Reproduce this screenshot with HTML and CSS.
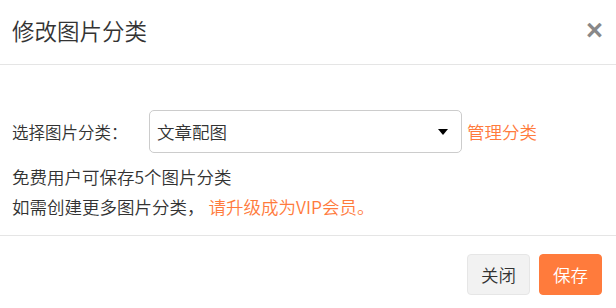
FILE: index.html
```html
<!DOCTYPE html>
<html lang="zh-CN">
<head>
<meta charset="utf-8">
<title>修改图片分类</title>
<link rel="stylesheet" href="styles.css">
</head>
<body>
<div class="modal">
  <div class="modal-header">
    <h4 class="modal-title">修改图片分类</h4>
    <button class="close" type="button">×</button>
  </div>
  <div class="modal-body">
    <div class="form-row">
      <label class="label">选择图片分类：</label>
      <div class="select">
        <span class="select-value">文章配图</span>
        <span class="caret"></span>
      </div>
      <a class="link" href="#">管理分类</a>
    </div>
    <p class="tip">免费用户可保存5个图片分类</p>
    <p class="tip">如需创建更多图片分类，<a class="link upgrade" href="#">请升级成为VIP会员。</a></p>
  </div>
  <div class="modal-footer">
    <button class="btn btn-default" type="button">关闭</button>
    <button class="btn btn-primary" type="button">保存</button>
  </div>
</div>
</body>
</html>
```

FILE: styles.css
```css
* { box-sizing: border-box; }
html, body {
  margin: 0;
  padding: 0;
  background: #fff;
}
body {
  font-family: "Microsoft YaHei", "Noto Sans CJK SC", "Liberation Sans", sans-serif;
  font-weight: 350;
  color: #333;
  width: 616px;
  height: 308px;
  overflow: hidden;
}
.modal {
  display: flex;
  flex-direction: column;
  width: 616px;
}
.modal-header {
  height: 65px;
  border-bottom: 1px solid #e5e5e5;
  display: flex;
  align-items: center;
  justify-content: space-between;
  padding: 0 13px 4px 12px;
}
.modal-title {
  margin: 0;
  font-size: 22.5px;
  font-weight: 350;
  line-height: 30px;
  color: #333;
}
.close {
  border: 0;
  background: none;
  padding: 0;
  font-family: "Liberation Sans", sans-serif;
  font-size: 29px;
  font-weight: bold;
  color: #888;
  line-height: 1;
  cursor: pointer;
}
.modal-body {
  height: 171px;
  padding: 45px 12px 0 12px;
  border-bottom: 1px solid #e5e5e5;
}
.form-row {
  display: flex;
  align-items: center;
  height: 43px;
  margin-bottom: 9px;
}
.label {
  font-size: 16.5px;
  width: 137px;
  flex: none;
}
.select {
  width: 313px;
  height: 43px;
  border: 1px solid #ccc;
  border-radius: 5px;
  display: flex;
  align-items: center;
  justify-content: space-between;
  padding: 0 13px 0 7px;
  font-size: 17.5px;
}
.caret {
  width: 0;
  height: 0;
  border-left: 5px solid transparent;
  border-right: 5px solid transparent;
  border-top: 6px solid #000;
}
.link {
  color: #ff7b3c;
  text-decoration: none;
}
.form-row .link {
  font-size: 17.5px;
  margin-left: 5px;
}
.tip {
  margin: 0;
  font-size: 17.5px;
  line-height: 30px;
}
.upgrade {
  margin-left: 4px;
}
.modal-footer {
  display: flex;
  justify-content: flex-end;
  gap: 9px;
  padding: 18px 14px 0 0;
}
.btn {
  width: 63px;
  height: 41px;
  border-radius: 4px;
  font-family: inherit;
  font-weight: 350;
  font-size: 17.5px;
  padding: 0;
  cursor: pointer;
}
.btn-default {
  background: #f2f2f2;
  border: 1px solid #e6e6e6;
  color: #333;
}
.btn-primary {
  background: #ff7b3c;
  border: 1px solid #ff7b3c;
  color: #fff;
}
```
